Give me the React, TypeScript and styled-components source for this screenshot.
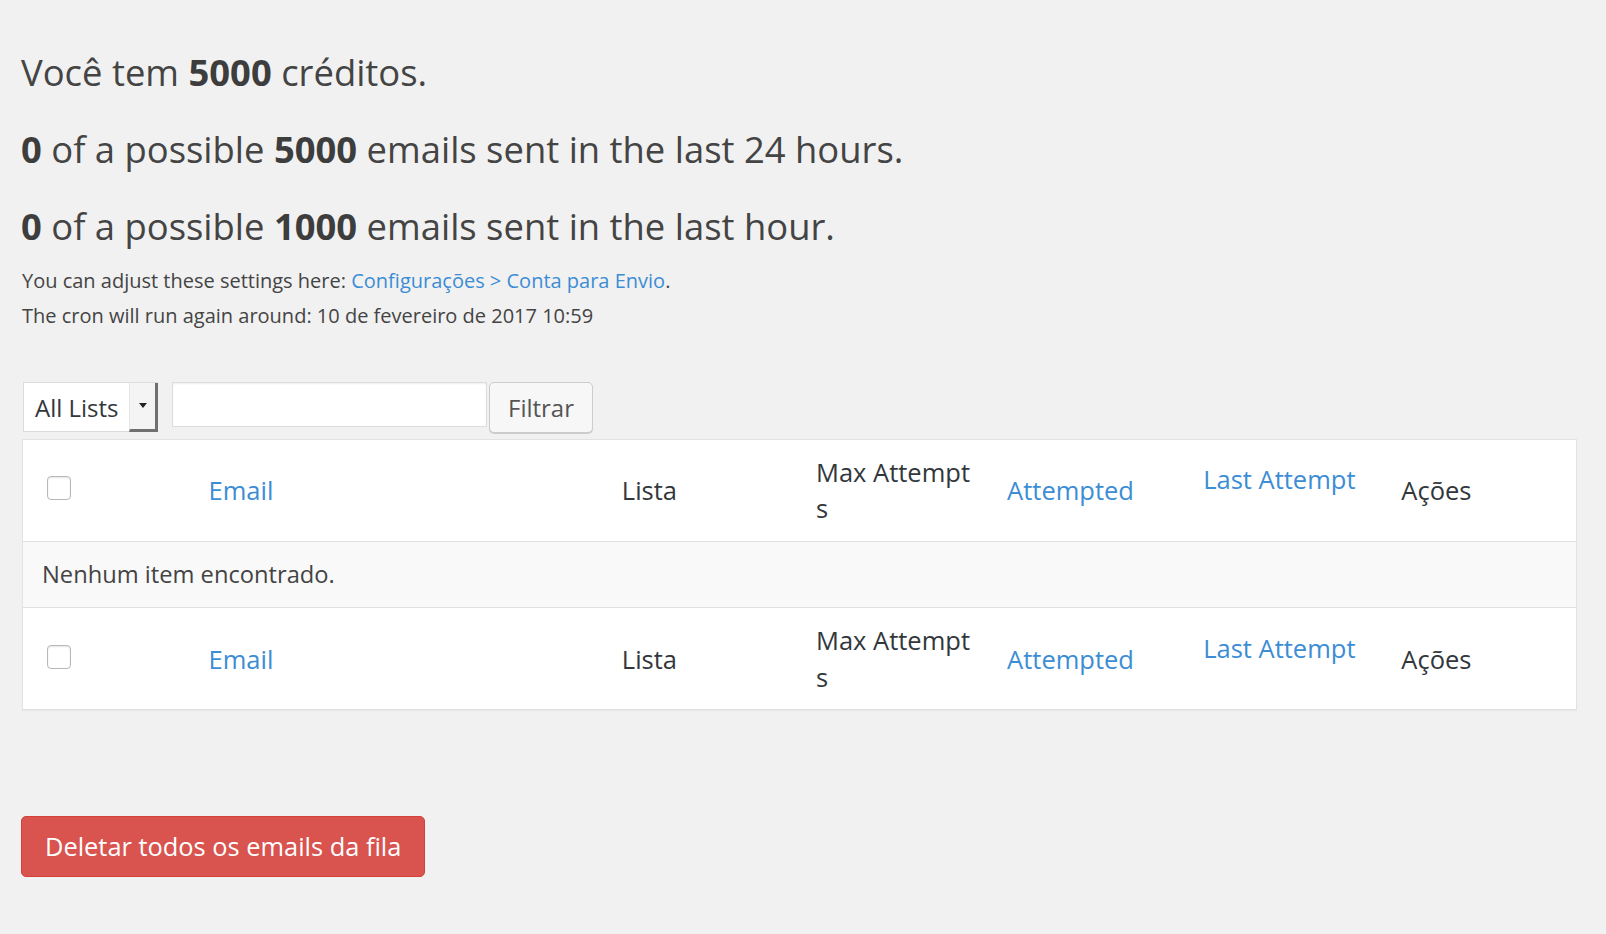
import React from "react";
import styled, { createGlobalStyle } from "styled-components";

const GlobalStyle = createGlobalStyle`
  *, *::before, *::after { box-sizing: border-box; }
  html, body { margin: 0; padding: 0; background: #f1f1f1; }
  body {
    font-family: "Open Sans", "Noto Sans", Arial, sans-serif;
    color: #444;
  }
`;

const Page = styled.div`
  padding: 49px 29px 40px 21px;
  min-height: 934px;
`;

const Headline = styled.h2`
  margin: 0 0 31px;
  font-size: 36.4px;
  line-height: 46px;
  font-weight: 400;
  color: #444;
  b { font-weight: 700; color: #3d3d3d; }
`;

const InfoBlock = styled.div`
  margin-top: -16px;
`;

const InfoLine = styled.p`
  margin: 0;
  font-size: 20px;
  line-height: 34.5px;
  color: #444;
  padding-left: 1px;
`;

const Link = styled.a`
  color: #3c8dd4;
  text-decoration: none;
`;

const Toolbar = styled.div`
  display: flex;
  align-items: flex-start;
  margin-top: 49px;
  padding-left: 2px;
`;

const Select = styled.div`
  display: flex;
  align-items: stretch;
  width: 135px;
  height: 50px;
  border: 1px solid #dcdcdc;
  background: #fff;
  font-size: 24px;
  color: #32373c;
`;

const SelectLabel = styled.span`
  flex: 1;
  display: flex;
  align-items: center;
  padding-left: 11px;
`;

const SelectArrow = styled.span`
  width: 29px;
  display: flex;
  align-items: center;
  justify-content: center;
  background: #f4f4f4;
  border-right: 3px solid #707070;
  border-bottom: 3px solid #707070;
  border-left: 1px solid #e6e6e6;
  margin: 0 -1px -1px 0;
  &::after {
    content: "";
    border-left: 4px solid transparent;
    border-right: 4px solid transparent;
    border-top: 5px solid #222;
    margin-top: -2px;
  }
`;

const SearchInput = styled.input`
  margin-left: 14px;
  width: 315px;
  height: 45px;
  border: 1px solid #ddd;
  background: #fff;
  box-shadow: inset 0 1px 2px rgba(0, 0, 0, 0.07);
  font-size: 24px;
  padding: 0 10px;
  outline: none;
`;

const FilterButton = styled.button`
  margin-left: 2px;
  height: 51px;
  padding: 0 18px;
  border: 1px solid #cccccc;
  border-radius: 5px;
  background: #f7f7f7;
  box-shadow: 0 1px 0 #cccccc;
  font-family: inherit;
  font-size: 24px;
  color: #555;
  cursor: pointer;
`;

const Table = styled.table`
  margin: 6px 0 0 1px;
  width: calc(100% - 1px);
  table-layout: fixed;
  border-collapse: collapse;
  border: 1px solid #e2e2e2;
  background: #fff;
  box-shadow: 0 1px 1px rgba(0, 0, 0, 0.04);
`;

const HeadCell = styled.th<{ $top?: boolean; $breakAll?: boolean }>`
  text-align: left;
  font-weight: 400;
  font-size: 25.5px;
  line-height: 36.4px;
  color: #32373c;
  padding: 14px 18px;
  vertical-align: middle;
  word-wrap: break-word;
  overflow-wrap: break-word;
  word-break: ${(p) => (p.$breakAll ? "break-all" : "normal")};
  border-bottom: ${(p) => (p.$top ? "1px solid #e1e1e1" : "none")};
  border-top: ${(p) => (p.$top ? "none" : "1px solid #e1e1e1")};
`;

const CheckCell = styled(HeadCell)`
  padding: 14px 0 14px 24px;
`;

const Checkbox = styled.span`
  display: block;
  width: 24px;
  height: 24px;
  margin-top: -4px;
  border: 1px solid #b4b9be;
  border-radius: 4px;
  background: #fff;
  box-shadow: inset 0 1px 2px rgba(0, 0, 0, 0.1);
`;

const SortLink = styled.a<{ $lift?: boolean }>`
  display: inline-block;
  color: #3c8dd4;
  text-decoration: none;
  padding-bottom: ${(p) => (p.$lift ? "22px" : "0")};
`;

const EmptyRow = styled.tr`
  background: #f9f9f9;
`;

const EmptyCell = styled.td`
  font-size: 23.7px;
  line-height: 33.6px;
  color: #444;
  padding: 16px 19px;
`;

const DangerButton = styled.button`
  margin-top: 105.5px;
  padding: 11px 23px;
  border: 1px solid #d43f3a;
  border-radius: 5px;
  background: #d9534f;
  color: #fff;
  font-family: inherit;
  font-size: 25.4px;
  line-height: 37px;
  cursor: pointer;
`;

const columns = [168, 413, 194, 191, 196, 198, 193];

function HeaderRow({ top }: { top?: boolean }) {
  return (
    <tr>
      <CheckCell $top={top}>
        <Checkbox />
      </CheckCell>
      <HeadCell $top={top}>
        <SortLink href="#">Email</SortLink>
      </HeadCell>
      <HeadCell $top={top}>Lista</HeadCell>
      <HeadCell $top={top} $breakAll>
        Max Attempts
      </HeadCell>
      <HeadCell $top={top}>
        <SortLink href="#">Attempted</SortLink>
      </HeadCell>
      <HeadCell $top={top}>
        <SortLink href="#" $lift>
          Last Attempt
        </SortLink>
      </HeadCell>
      <HeadCell $top={top}>Ações</HeadCell>
    </tr>
  );
}

export default function App() {
  return (
    <>
      <GlobalStyle />
      <Page>
        <Headline>
          Você tem <b>5000</b> créditos.
        </Headline>
        <Headline>
          <b>0</b> of a possible <b>5000</b> emails sent in the last 24 hours.
        </Headline>
        <Headline>
          <b>0</b> of a possible <b>1000</b> emails sent in the last hour.
        </Headline>
        <InfoBlock>
          <InfoLine>
            You can adjust these settings here:{" "}
            <Link href="#">Configurações &gt; Conta para Envio</Link>.
          </InfoLine>
          <InfoLine>The cron will run again around: 10 de fevereiro de 2017 10:59</InfoLine>
        </InfoBlock>
        <Toolbar>
          <Select>
            <SelectLabel>All Lists</SelectLabel>
            <SelectArrow />
          </Select>
          <SearchInput type="text" />
          <FilterButton>Filtrar</FilterButton>
        </Toolbar>
        <Table>
          <colgroup>
            {columns.map((w, i) => (
              <col key={i} style={{ width: w }} />
            ))}
          </colgroup>
          <thead>
            <HeaderRow top />
          </thead>
          <tbody>
            <EmptyRow>
              <EmptyCell colSpan={7}>Nenhum item encontrado.</EmptyCell>
            </EmptyRow>
          </tbody>
          <tfoot>
            <HeaderRow />
          </tfoot>
        </Table>
        <DangerButton>Deletar todos os emails da fila</DangerButton>
      </Page>
    </>
  );
}
